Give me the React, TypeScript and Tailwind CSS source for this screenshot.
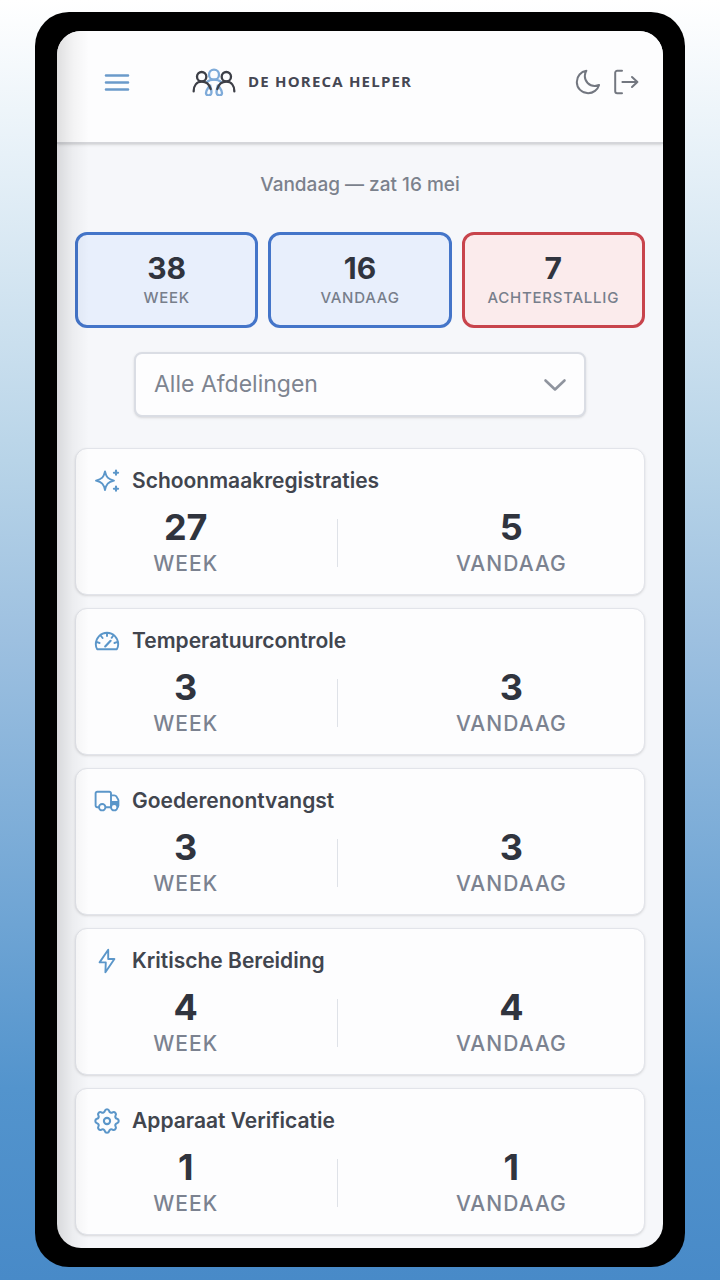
import { useState } from 'react';
import type { ReactNode } from 'react';

const iconProps = {
  width: 26,
  height: 26,
  viewBox: '0 0 26 26',
  fill: 'none',
  stroke: 'currentColor',
  strokeWidth: 1.9,
  strokeLinecap: 'round',
  strokeLinejoin: 'round',
  'aria-hidden': true,
} as const;

function SparklesIcon() {
  return (
    <svg {...iconProps}>
      <path d="M11 3.4c1.300 5.800 3 7.800 9 9.200-6 1.400-7.700 3.400-9 9.400-1.300-6-3-8-9-9.400 6-1.400 7.700-3.400 9-9.200z" />
      <path d="M22 2.600v4.200M19.900 4.700h4.200M22 18.600v4.200M19.900 20.700h4.200" strokeWidth="2.100" />
    </svg>
  );
}

function GaugeIcon() {
  return (
    <svg {...iconProps}>
      <path d="M3.200 21.200C2.200 19.600 1.800 18 1.800 16.200 1.800 9.800 6.800 4.800 13 4.800s11.200 5 11.200 11.400c0 1.800-.4 3.400-1.400 5z" />
      <path d="M13 5v3M7 8l1.600 2M19 8l-1.400 1.800M3 14.200l2.600.8M23 14.200l-2.600.8" />
      <path d="M11.200 18.400l5.400-5.600" strokeWidth="2.200" />
    </svg>
  );
}

function TruckIcon() {
  return (
    <svg {...iconProps}>
      <path d="M4.600 19.200H3.200a1.600 1.600 0 0 1-1.600-1.600V5.400a1.600 1.600 0 0 1 1.600-1.600h12.200A1.600 1.600 0 0 1 17 5.400v13.800H11.600" />
      <path d="M17 7.400h3.200c1 0 1.800.4 2.300 1.200l1.500 2.600c.2.400.4.800.4 1.400v5c0 .9-.6 1.600-1.400 1.600" />
      <path d="M17 13h7.400v5.600H17z" fill="currentColor" stroke="none" />
      <circle cx="8.200" cy="19.200" r="3.200" fill="#fdfdfe" />
      <circle cx="20.200" cy="19.200" r="3.200" fill="#fdfdfe" />
    </svg>
  );
}

function BoltIcon() {
  return (
    <svg {...iconProps}>
      <path d="M14.200 1.800L5.600 14.400h6.200L11.400 24.200 20.400 11h-6.200z" />
    </svg>
  );
}

function GearIcon() {
  return (
    <svg {...iconProps} viewBox="2 2 20 20" strokeWidth={1.6}>
      <path d="M10.325 4.317c.426-1.756 2.924-1.756 3.350 0a1.724 1.724 0 0 0 2.573 1.066c1.543-.94 3.310.826 2.370 2.370a1.724 1.724 0 0 0 1.065 2.572c1.756.426 1.756 2.924 0 3.350a1.724 1.724 0 0 0-1.066 2.573c.94 1.543-.826 3.310-2.370 2.370a1.724 1.724 0 0 0-2.572 1.065c-.426 1.756-2.924 1.756-3.350 0a1.724 1.724 0 0 0-2.573-1.066c-1.543.94-3.310-.826-2.370-2.370a1.724 1.724 0 0 0-1.065-2.572c-1.756-.426-1.756-2.924 0-3.350a1.724 1.724 0 0 0 1.066-2.573c-.94-1.543.826-3.310 2.370-2.370 1 .608 2.296.07 2.572-1.065z" />
      <circle cx="12" cy="12" r="2.400" />
    </svg>
  );
}

function Logo() {
  return (
    <svg width="44" height="28" viewBox="0 0 132 84" fill="none" strokeWidth="7" strokeLinecap="round" aria-hidden="true">
      <g stroke="#7fabd9">
        <circle cx="66" cy="20" r="15" />
        <path d="M45 42c6-6 14-7 21-7s15 1 21 7" />
        <path d="M54 50c-2 8-13 15-12 26 1 8 14 8 16 0 2-9-3-17-4-26z" />
        <path d="M78 50c2 8 13 15 12 26-1 8-14 8-16 0-2-9 3-17 4-26z" />
      </g>
      <g stroke="#3d3f47">
        <circle cx="29" cy="26" r="14" />
        <circle cx="103" cy="26" r="14" />
        <path d="M5 70c0-17 9-29 24-29 13 0 23 8 27 22" />
        <path d="M127 70c0-17-9-29-24-29-13 0-23 8-27 22" />
      </g>
    </svg>
  );
}

const stats = [
  { value: 38, label: 'WEEK', style: 'border-[#4475c9] bg-[#e8effc]' },
  { value: 16, label: 'VANDAAG', style: 'border-[#4475c9] bg-[#e8effc]' },
  { value: 7, label: 'ACHTERSTALLIG', style: 'border-[#c8444c] bg-[#fbebec]' },
];

const modules = [
  { title: 'Schoonmaakregistraties', icon: <SparklesIcon />, week: 27, today: 5 },
  { title: 'Temperatuurcontrole', icon: <GaugeIcon />, week: 3, today: 3 },
  { title: 'Goederenontvangst', icon: <TruckIcon />, week: 3, today: 3 },
  { title: 'Kritische Bereiding', icon: <BoltIcon />, week: 4, today: 4 },
  { title: 'Apparaat Verificatie', icon: <GearIcon />, week: 1, today: 1 },
];

function Header() {
  return (
    <header className="flex items-center border-b-2 border-[#d5d6da] bg-[#fdfdfe] pt-[37px] pr-6 pb-[46px] pl-[46px] shadow-sm">
      <button aria-label="Menu" className="text-[#6b9aca]">
        <svg {...iconProps} width={28} height={28} viewBox="0 0 28 28" strokeWidth={2.6}>
          <path d="M3 7.500h22M3 14.500h22M3 21.500h22" />
        </svg>
      </button>
      <div className="ml-[61px] flex items-center gap-3">
        <Logo />
        <span className="pb-0.5 font-['Open_Sans',sans-serif] text-[15px] leading-6 font-bold tracking-[0.08em] text-[#454753]">
          DE HORECA HELPER
        </span>
      </div>
      <div className="ml-auto flex items-center gap-3 text-[#737780]">
        <button aria-label="Donkere modus">
          <svg {...iconProps} strokeWidth={2}>
            <path d="M11.400 1.800C6 2.600 1.800 7.200 1.800 12.900c0 6.300 5 11.300 11.300 11.300 5.200 0 9.600-3.400 11-8.200-1.300.6-2.800.9-4.400.9-5.600 0-9.900-4.400-9.900-9.900 0-1.900.6-3.700 1.600-5.200z" />
          </svg>
        </button>
        <button aria-label="Uitloggen">
          <svg {...iconProps} strokeWidth={2}>
            <path d="M9 1.800H4.200a2 2 0 0 0-2 2v18.400a2 2 0 0 0 2 2H9M9.400 13H24.400M19 8l5.400 5-5.400 5" />
          </svg>
        </button>
      </div>
    </header>
  );
}

function Count({ value, label }: { value: number; label: string }) {
  return (
    <div className="flex flex-col items-center gap-[3px]">
      <span className="text-4xl leading-10 font-bold text-[#30343e]">{value}</span>
      <span className="text-[21px] leading-7 font-medium tracking-wider text-[#7b8290]">{label}</span>
    </div>
  );
}

function ModuleCard({ title, icon, week, today }: { title: string; icon: ReactNode; week: number; today: number }) {
  return (
    <section className="rounded-xl border border-[#e2e4ea] bg-[#fdfdfe] px-[18px] pt-[18px] pb-4 shadow">
      <div className="flex items-center gap-3 text-[#5b96c9]">
        {icon}
        <h2 className="text-[21px] leading-7 font-semibold text-[#41454e]">{title}</h2>
      </div>
      <div className="mt-3 flex items-center justify-around">
        <Count value={week} label="WEEK" />
        <div className="h-12 w-px bg-[#dfe2e8]" />
        <Count value={today} label="VANDAAG" />
      </div>
    </section>
  );
}

export default function App() {
  const [department, setDepartment] = useState('alle');

  return (
    <div className="min-h-screen bg-[linear-gradient(180deg,#ffffff_0%,#e7f1f8_12%,#b8d4e8_36%,#9dc0e0_50%,#5394cd_85%,#488ac8_100%)] px-[35px] py-3 font-[Inter,sans-serif]">
      <div className="rounded-[34px] bg-black px-[22px] py-[19px]">
        <div className="relative overflow-hidden rounded-3xl bg-[#f6f7fa]">
          <Header />

          <main className="px-[18px] pt-[27px] pb-[13px]">
            <p className="text-center text-[19px] leading-7 font-medium text-[#7b818c]">Vandaag — zat 16 mei</p>

            <div className="mt-[33px] grid grid-cols-3 gap-[10px]">
              {stats.map((stat) => (
                <button
                  key={stat.label}
                  className={`flex flex-col items-center rounded-xl border-[3px] pt-[15px] pb-[17px] ${stat.style}`}
                >
                  <span className="text-3xl leading-9 font-bold text-[#30343e]">{stat.value}</span>
                  <span className="mt-0.5 text-[15px] leading-5 font-medium tracking-wider text-[#777e8b]">
                    {stat.label}
                  </span>
                </button>
              ))}
            </div>

            <div className="relative mx-[59px] mt-6">
              <select
                aria-label="Afdeling"
                value={department}
                onChange={(e) => setDepartment(e.target.value)}
                className="h-[65px] w-full appearance-none rounded-lg border-2 border-[#dadde4] bg-[#fdfdfe] px-[18px] text-[23px] text-[#7d8490] shadow-sm"
              >
                <option value="alle">Alle Afdelingen</option>
                <option value="keuken">Keuken</option>
                <option value="bediening">Bediening</option>
              </select>
              <svg
                {...iconProps}
                strokeWidth={2.600}
                className="pointer-events-none absolute top-5 right-[18px] text-[#8f949e]"
              >
                <path d="M3.500 8.500L13 17.500l9.500-9" />
              </svg>
            </div>

            <div className="mt-[31px] flex flex-col gap-[13px]">
              {modules.map((module) => (
                <ModuleCard key={module.title} {...module} />
              ))}
            </div>
          </main>

          {/* Soft shade along the left edge of the screen */}
          <div className="pointer-events-none absolute inset-y-0 left-0 w-8 bg-linear-to-r from-black/12 via-black/4 to-transparent" />
        </div>
      </div>
    </div>
  );
}
